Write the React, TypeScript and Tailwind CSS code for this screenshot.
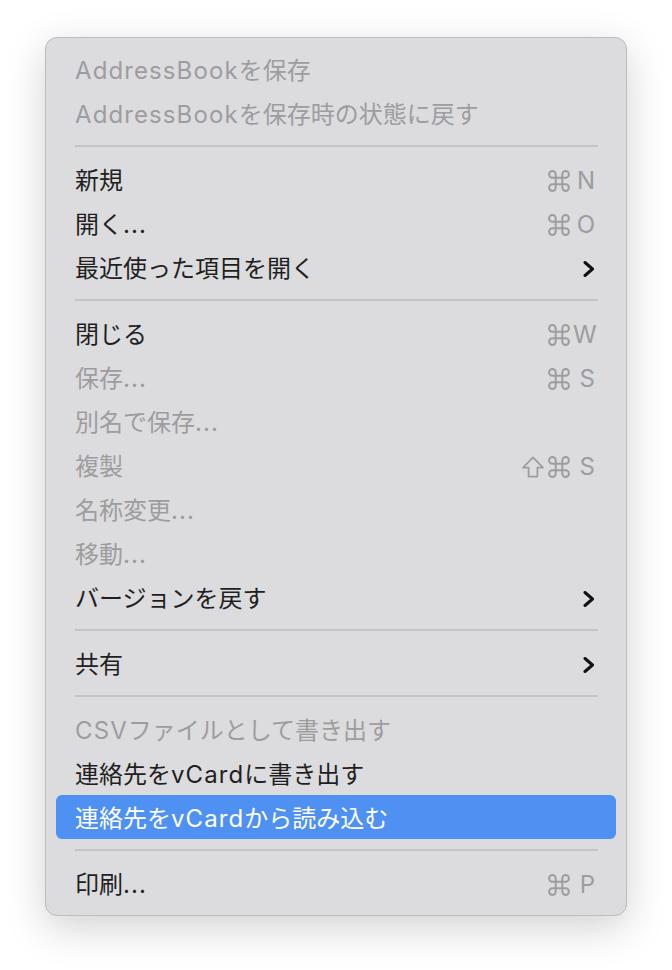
import { Fragment } from "react";

type Item = {
	label: string,
	disabled?: boolean,
	keys?: string[],
	submenu?: boolean,
	active?: boolean
}

const groups: Item[][] = [
	[
		{ label: "AddressBookを保存", disabled: true },
		{ label: "AddressBookを保存時の状態に戻す", disabled: true },
	],
	[
		{ label: "新規", keys: ["cmd", "N"] },
		{ label: "開く...", keys: ["cmd", "O"] },
		{ label: "最近使った項目を開く", submenu: true },
	],
	[
		{ label: "閉じる", keys: ["cmd", "W"] },
		{ label: "保存...", disabled: true, keys: ["cmd", "S"] },
		{ label: "別名で保存...", disabled: true },
		{ label: "複製", disabled: true, keys: ["shift", "cmd", "S"] },
		{ label: "名称変更...", disabled: true },
		{ label: "移動...", disabled: true },
		{ label: "バージョンを戻す", submenu: true },
	],
	[
		{ label: "共有", submenu: true },
	],
	[
		{ label: "CSVファイルとして書き出す", disabled: true },
		{ label: "連絡先をvCardに書き出す" },
		{ label: "連絡先をvCardから読み込む", active: true },
	],
	[
		{ label: "印刷...", keys: ["cmd", "P"] },
	],
]

function Chevron() {
	return (
		<svg width="12" height="16" viewBox="0 0 12 16">
			<polyline points="2,1.5 9.5,8 2,14.5" fill="none" stroke="#111" strokeWidth="3" strokeLinecap="round" strokeLinejoin="round" />
		</svg>
	)
}

// ⌘ key symbol
function CmdIcon() {
	return (
		<svg width="22" height="22" viewBox="2 2 20 20" fill="none" stroke="currentColor" strokeWidth="1.8" strokeLinecap="round" strokeLinejoin="round" className="mr-[3px]">
			<path d="M15 6v12a3 3 0 1 0 3-3H6a3 3 0 1 0 3 3V6a3 3 0 1 0-3 3h12a3 3 0 1 0-3-3" />
		</svg>
	)
}

// ⇧ key symbol
function ShiftIcon() {
	return (
		<svg width="22" height="22" viewBox="4.5 4.5 15 15" fill="none" stroke="currentColor" strokeWidth="1.2" strokeLinejoin="round" className="mr-[4px]">
			<path d="M9 18.5v-6H5.2L12 5.5l6.8 7H15v6H9z" />
		</svg>
	)
}

function Shortcut({ keys }: { keys: string[] }) {
	const letter = keys[keys.length - 1]
	return (
		<div className="flex items-center text-[#9d9d9f]">
			{keys.includes("shift") && <ShiftIcon />}
			<CmdIcon />
			<span className="w-[22px] text-right text-[24px] leading-none">{letter}</span>
		</div>
	)
}

function Label({ text }: { text: string }) {
	// latin runs are a bit wider in the original font
	const parts = text.split(/([A-Za-z.]+)/)
	return (
		<span className="text-[24px] leading-none whitespace-nowrap">
			{parts.map((p, i) => i % 2 === 1
				? <span key={i} className="tracking-[1.1px]">{p}</span>
				: <span key={i}>{p}</span>)}
		</span>
	)
}

function Row({ item }: { item: Item }) {
	const color = item.active ? "text-white" : item.disabled ? "text-[#9d9d9f]" : "text-[#1f1f1f]"
	return (
		<div className={`h-[44px] rounded-[6px] pt-[4px] pl-[19px] pr-[21px] flex items-center justify-between ${color} ${item.active ? "bg-[#4f91f2]" : ""}`}>
			<Label text={item.label} />
			{item.keys && <Shortcut keys={item.keys} />}
			{item.submenu && <Chevron />}
		</div>
	)
}

export default function App() {
	return (
		<div className="min-h-screen bg-white pt-[37px] pl-[45px] font-['Inter','Noto_Sans_CJK_JP',sans-serif]">
			<div className="w-[582px] rounded-[12px] border border-[#bcbcbe] bg-[#dcdcde] px-[10px] pt-[9px] pb-[10px] shadow-[0_12px_40px_rgba(0,0,0,0.18)]">
				{groups.map((g, gi) => (
					<Fragment key={gi}>
						{gi > 0 && (
							<div className="h-[22px] flex items-center pl-[19px] pr-[18px]">
								<div className="h-[2px] w-full bg-[#c4c4c6]" />
							</div>
						)}
						{g.map((item, i) => <Row key={i} item={item} />)}
					</Fragment>
				))}
			</div>
		</div>
	)
}
